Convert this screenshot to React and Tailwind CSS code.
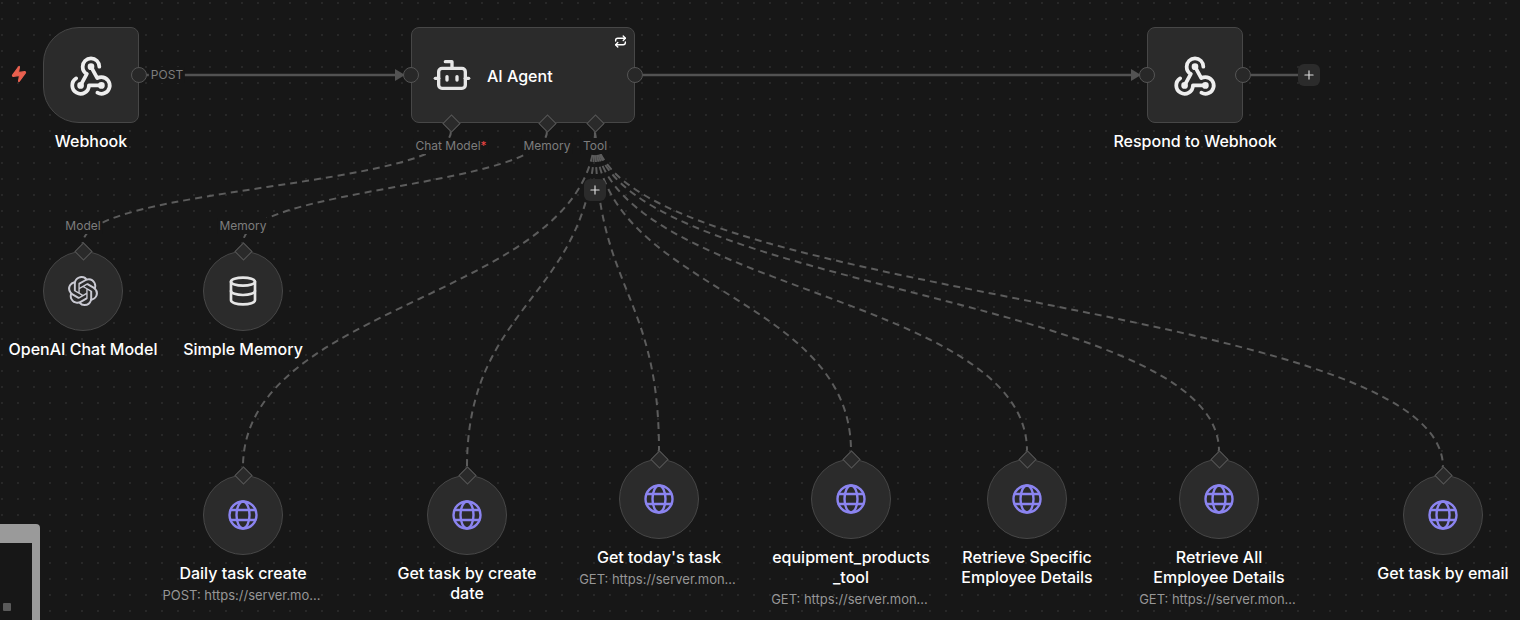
import React from 'react'
import { Bot, Database, Plus, Repeat, Zap } from 'lucide-react'
import { SiOpenai } from 'react-icons/si'

const GlobeIcon = () => (
  <svg width="32" height="32" viewBox="0 0 32 32" fill="none" stroke="#8b84f0" strokeWidth="2.4" strokeLinecap="round">
    <circle cx="16" cy="16" r="13.5" />
    <ellipse cx="16" cy="16" rx="6.5" ry="13.5" />
    <path d="M3.8 11h24.4M3.8 21h24.4" />
  </svg>
)

const WebhookIcon = () => (
  <svg width="50" height="50" viewBox="0 0 24 24" fill="none" stroke="currentColor" strokeWidth="1.8" strokeLinecap="round" strokeLinejoin="round">
    <path d="M4.876 13.61a4 4 0 1 0 6.124 3.39h6" />
    <path d="M15.066 20.502a4 4 0 1 0 1.934 -7.502c-.706 0 -1.424 .179 -2 .5l-3 -5.5" />
    <path d="M16 8a4 4 0 1 0 -8 0c0 1.506 .77 2.818 2 3.5l-3 5.5" />
    <circle cx="12" cy="8" r="0.7" fill="currentColor" />
    <circle cx="7" cy="17" r="0.7" fill="currentColor" />
    <circle cx="17" cy="17" r="0.7" fill="currentColor" />
  </svg>
)

const Diamond = ({ className }) => (
  <div className={`absolute w-[13px] h-[13px] rotate-45 bg-[#2a2a2a] border border-[#555] ${className}`} />
)

const Port = ({ className }) => (
  <div className={`absolute w-4 h-4 rounded-full bg-[#282828] border border-[#555] ${className}`} />
)

const PlusButton = ({ className }) => (
  <div className={`absolute w-[22px] h-[22px] rounded-md bg-[#2b2b2b] flex items-center justify-center text-[#ddd] ${className}`}>
    <Plus size={14} strokeWidth={2} />
  </div>
)

const NodeLabel = ({ name, sub, className }) => (
  <div className={`absolute w-[176px] flex flex-col items-center text-center ${className}`}>
    <div className="text-base leading-5 font-medium text-white">{name}</div>
    {sub && <div className="mt-1 pr-[3px] text-[13px] leading-4 text-[#969696] whitespace-nowrap">{sub}</div>}
  </div>
)

const PortLabel = ({ children, className }) => (
  <div className={`absolute -translate-x-1/2 px-0.5 text-xs leading-4 text-[#7d7d7d] bg-[#171717] ${className}`}>
    {children}
  </div>
)

const SubNode = ({ className, children, name, sub }) => (
  <div className={`absolute w-20 h-20 ${className}`}>
    <div className="w-full h-full rounded-full bg-[#2b2b2b] border border-[#474747] flex items-center justify-center">
      {children}
    </div>
    <Diamond className="-top-[6.5px] left-[33.5px]" />
    <NodeLabel name={name} sub={sub} className="top-[88px] -left-12" />
  </div>
)

const tools = [
  { name: 'Daily task create', sub: 'POST: https://server.mo...', pos: 'left-[203px] top-[475px]' },
  { name: <>Get task by create<br />date</>, pos: 'left-[427px] top-[475px]' },
  { name: "Get today's task", sub: 'GET: https://server.mon...', pos: 'left-[619px] top-[459px]' },
  { name: <>equipment_products<br />_tool</>, sub: 'GET: https://server.mon...', pos: 'left-[811px] top-[459px]' },
  { name: <>Retrieve Specific<br />Employee Details</>, pos: 'left-[987px] top-[459px]' },
  { name: <>Retrieve All<br />Employee Details</>, sub: 'GET: https://server.mon...', pos: 'left-[1179px] top-[459px]' },
  { name: 'Get task by email', pos: 'left-[1403px] top-[475px]' },
]

// bezier from the port down to the node's diamond, control points at mid height
const dashedEdges = [
  'M451 131C451 187 83 187 83 243',
  'M547 131C547 187 243 187 243 243',
  'M595 131C595 299 243 299 243 467',
  'M595 131C595 299 467 299 467 467',
  'M595 131C595 291 659 291 659 451',
  'M595 131C595 291 851 291 851 451',
  'M595 131C595 291 1027 291 1027 451',
  'M595 131C595 291 1219 291 1219 451',
  'M595 131C595 299 1443 299 1443 467',
]

const Edges = () => (
  <svg className="absolute inset-0" width="1520" height="620" fill="none">
    <path d="M147 75H396" stroke="#525252" strokeWidth="2.5" />
    <path d="M395 69L405 75L395 81Z" fill="#525252" />
    <path d="M643 75H1132" stroke="#525252" strokeWidth="2.5" />
    <path d="M1131 69L1141 75L1131 81Z" fill="#525252" />
    <path d="M1251 75H1298" stroke="#525252" strokeWidth="2.5" />
    {dashedEdges.map((d) => (
      <path key={d} d={d} stroke="#5c5c5c" strokeWidth="2" strokeDasharray="7 5" />
    ))}
  </svg>
)

export default function App() {
  return (
    <div className="relative w-[1520px] h-[620px] overflow-hidden bg-[#171717] bg-[radial-gradient(#2e2e2e_0.6px,transparent_1px)] bg-[length:16px_16px] bg-[position:10px_11px] font-[Inter,sans-serif]">
      <Edges />

      {/* trigger */}
      <Zap size={18} strokeWidth={1.5} className="absolute left-[10px] top-[65px] -rotate-[8deg] text-[#e9604f] fill-[#e9604f]" />
      <div className="absolute left-[43px] top-[27px] w-24 h-24 rounded-l-[36px] rounded-r-lg bg-[#2b2b2b] border border-[#474747] flex items-center justify-center text-[#eee]">
        <WebhookIcon />
      </div>
      <Port className="left-[131px] top-[67px]" />
      <NodeLabel name="Webhook" className="left-[3px] top-[131px]" />
      <PortLabel className="left-[167px] top-[67px]">POST</PortLabel>

      {/* agent */}
      <div className="absolute left-[411px] top-[27px] w-56 h-24 rounded-lg bg-[#2b2b2b] border border-[#474747] flex items-center pl-5 gap-[15px] text-white">
        <Bot size={40} strokeWidth={2} className="text-[#e6e6e6]" />
        <span className="mt-0.5 text-base font-medium">AI Agent</span>
        <Repeat size={13} strokeWidth={2.5} className="absolute right-[7px] top-[7px]" />
      </div>
      <Port className="left-[403px] top-[67px]" />
      <Port className="left-[627px] top-[67px]" />
      <Diamond className="left-[444.5px] top-[116.5px]" />
      <Diamond className="left-[540.5px] top-[116.5px]" />
      <Diamond className="left-[588.5px] top-[116.5px]" />
      <PortLabel className="left-[451px] top-[138px]">Chat Model<span className="text-[#ef4444]">*</span></PortLabel>
      <PortLabel className="left-[547px] top-[138px]">Memory</PortLabel>
      <PortLabel className="left-[595px] top-[138px]">Tool</PortLabel>
      <PlusButton className="left-[584px] top-[179px]" />

      {/* respond */}
      <div className="absolute left-[1147px] top-[27px] w-24 h-24 rounded-lg bg-[#2b2b2b] border border-[#474747] flex items-center justify-center text-[#eee]">
        <WebhookIcon />
      </div>
      <Port className="left-[1139px] top-[67px]" />
      <Port className="left-[1235px] top-[67px]" />
      <NodeLabel name="Respond to Webhook" className="left-[1107px] top-[131px]" />
      <PlusButton className="left-[1298px] top-[64px]" />

      {/* model and memory */}
      <PortLabel className="left-[83px] top-[218px]">Model</PortLabel>
      <PortLabel className="left-[243px] top-[218px]">Memory</PortLabel>
      <SubNode className="left-[43px] top-[251px]" name="OpenAI Chat Model">
        <SiOpenai size={30} className="text-[#c9c9d2]" />
      </SubNode>
      <SubNode className="left-[203px] top-[251px]" name="Simple Memory">
        <Database size={32} strokeWidth={2} className="text-[#e6e6e6]" />
      </SubNode>

      {/* tools */}
      {tools.map((t, i) => (
        <SubNode key={i} className={t.pos} name={t.name} sub={t.sub}>
          <GlobeIcon />
        </SubNode>
      ))}

      {/* sticky note cut off at the corner */}
      <div className="absolute left-[-20px] top-[524px] w-[60px] h-[120px] rounded bg-[#9a9a9a] pt-[19px] pr-2">
        <div className="relative h-full bg-[#171717]">
          <div className="absolute left-[23px] top-[60px] w-2 h-2 rounded-[1px] bg-[#5a5a5a]" />
        </div>
      </div>
    </div>
  )
}
